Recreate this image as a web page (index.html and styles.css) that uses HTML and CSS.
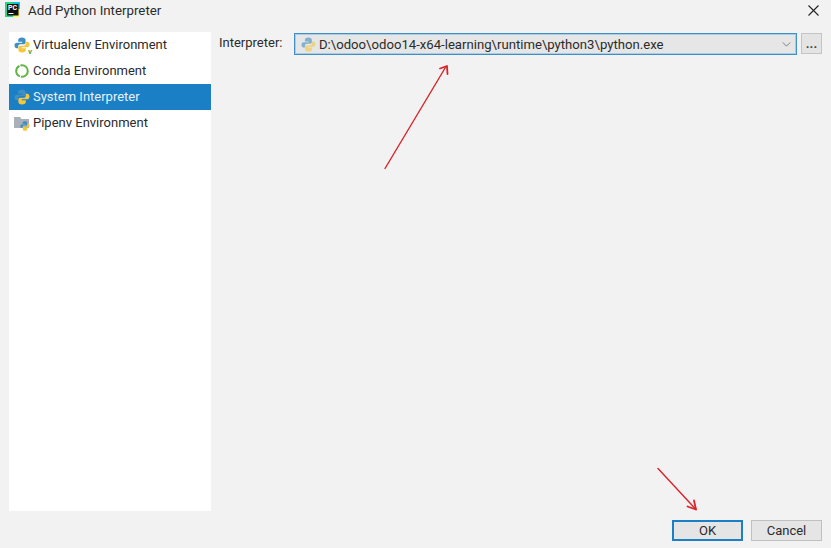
FILE: index.html
```html
<!DOCTYPE html>
<html lang="en">
<head>
<meta charset="utf-8">
<title>Add Python Interpreter</title>
<link rel="stylesheet" href="styles.css">
</head>
<body>
<svg width="0" height="0" class="defs">
  <defs>
    <symbol id="py" viewBox="0 0 16 16">
      <path fill="#3f8fc4" d="M8 .5C5.400.5 4.200 1.500 4.200 3V4.800h4v.9H3C1.300 5.700.5 6.800.5 8.300c0 1.600.8 3 2.200 3h1.500V9.300c0-1.200 1-2.100 2.200-2.100h3.400c1 0 1.800-.8 1.800-1.800V3C11.600 1.500 10.300.5 8 .5z"/>
      <path fill="#f5c73d" d="M8 15.500c2.600 0 3.800-1 3.800-2.500V11.200h-4v-.9H13c1.700 0 2.500-1.100 2.500-2.600 0-1.600-.8-3-2.200-3h-1.500v2c0 1.200-1 2.100-2.200 2.100H6.200c-1 0-1.800.8-1.800 1.800V13c0 1.500 1.300 2.500 3.600 2.500z"/>
    </symbol>
  </defs>
</svg>
<div class="dialog">
  <header class="titlebar">
    <span class="app-logo">
      <svg class="app-icon" viewBox="0 0 15 15" width="15" height="15" aria-hidden="true">
        <path fill="#21d789" d="M0 0h8v15H0z"/>
        <path fill="#fcf84a" d="M8 7h7v8H8z"/>
        <path fill="#07c3f2" d="M8 0h7v7H8z"/>
        <path fill="#111" d="M2 2h11.500v11.500H2z"/>
        <path fill="#fff" d="M3.500 11h5v1h-5z"/>
      </svg>
      <span class="app-mark">PC</span>
    </span>
    <h1 class="title">Add Python Interpreter</h1>
    <svg class="close" viewBox="0 0 11 11" width="11" height="11" aria-hidden="true">
      <path d="M.5.5l10 10M10.500.5l-10 10" stroke="#222" stroke-width="1.100" fill="none"/>
    </svg>
  </header>
  <div class="body">
    <nav class="sidebar">
      <div class="item">
        <span class="ico"><svg width="16" height="16"><use href="#py"/></svg><b class="v">v</b></span>
        <span>Virtualenv Environment</span>
      </div>
      <div class="item">
        <span class="ico"><svg viewBox="0 0 16 16" width="16" height="16" aria-hidden="true"><circle cx="8" cy="8" r="5.800" fill="none" stroke="#62b543" stroke-width="2" stroke-dasharray="10 1 13 1 11 1"/></svg></span>
        <span>Conda Environment</span>
      </div>
      <div class="item selected">
        <span class="ico"><svg width="16" height="16"><use href="#py"/></svg></span>
        <span>System Interpreter</span>
      </div>
      <div class="item">
        <span class="ico"><svg viewBox="0 0 16 16" width="16" height="16" aria-hidden="true"><path fill="#a9b0b8" d="M0 2h6l1.500 2H15v9H0z"/><use href="#py" x="6" y="6" width="10" height="10"/></svg></span>
        <span>Pipenv Environment</span>
      </div>
    </nav>
    <main class="panel">
      <div class="field">
        <label class="field-label">Interpreter:</label>
        <div class="combo">
          <svg class="combo-icon" width="15" height="15" aria-hidden="true"><use href="#py" opacity="0.6"/></svg>
          <span class="combo-text">D:\odoo\odoo14-x64-learning\runtime\python3\python.exe</span>
          <svg class="chev" viewBox="0 0 10 6" width="9" height="5" aria-hidden="true"><path d="M.5.500l4.500 4.500L9.500.500" fill="none" stroke="#777" stroke-width="1.100"/></svg>
        </div>
        <button class="browse">...</button>
      </div>
    </main>
  </div>
  <footer class="actions">
    <button class="btn primary">OK</button>
    <button class="btn">Cancel</button>
  </footer>
</div>
<svg class="arrows" viewBox="0 0 831 548" width="831" height="548" aria-hidden="true">
  <g fill="none" stroke="#d9242a" stroke-width="1.400" stroke-linecap="round" stroke-linejoin="round">
    <path d="M385 168.500L446 66.500"/>
    <path d="M440 68.500L447 66l.5 8" stroke-width="1.800"/>
    <path d="M658 468.500L696 509.500"/>
    <path d="M687.500 506.500L696 509.500l-2-9" stroke-width="1.800"/>
  </g>
</svg>
</body>
</html>
```
FILE: styles.css
```css
* { box-sizing: border-box; }
html, body { margin: 0; padding: 0; }
body {
  width: 831px;
  height: 548px;
  overflow: hidden;
  background: #f2f2f2;
  color: #2b2b2b;
  font-family: Roboto, sans-serif;
  font-size: 13px;
  position: relative;
}
.defs { position: absolute; }
.dialog {
  display: flex;
  flex-direction: column;
  height: 548px;
  padding: 0 9px 7px;
}
.titlebar {
  height: 32px;
  flex: none;
  display: flex;
  align-items: flex-start;
  padding-top: 2px;
  margin-left: -4px;
}
.app-logo { position: relative; width: 15px; height: 15px; flex: none; margin-right: 8px; }
.app-icon { display: block; }
.app-mark {
  position: absolute;
  left: 3px;
  top: 2px;
  color: #fff;
  font-size: 7px;
  font-weight: 700;
  line-height: 8px;
}
.title {
  margin: 0;
  font-size: 13.300px;
  font-weight: 400;
  line-height: 17px;
  flex: 1;
}
.close { margin: 3px 3px 0 0; }
.body { flex: 1; display: flex; min-height: 0; }
.sidebar {
  width: 202px;
  flex: none;
  height: 479px;
  background: #fff;
}
.item {
  height: 26px;
  display: flex;
  align-items: center;
  gap: 3px;
  padding: 0 0 1px 5px;
  white-space: nowrap;
}
.item.selected { background: #1a7fc4; color: #e6f1f9; }
.ico { width: 16px; height: 16px; position: relative; display: block; margin-top: 1px; }
.ico svg { display: block; }
.v {
  position: absolute;
  right: -2px;
  bottom: -3px;
  font-size: 8px;
  line-height: 9px;
  color: #62a83a;
}
.panel { flex: 1; padding: 1px 0 0 8px; min-width: 0; }
.field { display: flex; align-items: flex-start; }
.field-label { width: 75px; flex: none; line-height: 20px; }
.combo {
  width: 503px;
  height: 22px;
  flex: none;
  display: flex;
  align-items: center;
  border: 1px solid #3f8fc9;
  box-shadow: inset 0 0 0 1px #a9cde8;
  background: #e6e6e6;
  padding: 0 5px 0 6px;
}
.combo-icon { flex: none; margin-right: 3px; }
.combo-text { flex: 1; white-space: nowrap; font-size: 13.150px; }
.browse {
  width: 21px;
  height: 21px;
  margin-left: 4px;
  padding: 0 0 1px;
  border: 1px solid #c4c4c4;
  background: #e4e4e4;
  font: inherit;
  font-weight: 700;
  color: #444;
  line-height: 1;
}
.actions {
  flex: none;
  display: flex;
  justify-content: flex-end;
  gap: 8px;
}
.btn {
  width: 71px;
  height: 21px;
  padding: 0;
  border: 1px solid #c0c0c0;
  background: #e5e5e5;
  color: #2b2b2b;
  font: inherit;
  line-height: 18px;
}
.btn.primary { border: 2px solid #1a7fc4; }
.arrows { position: absolute; left: 0; top: 0; pointer-events: none; }
```
